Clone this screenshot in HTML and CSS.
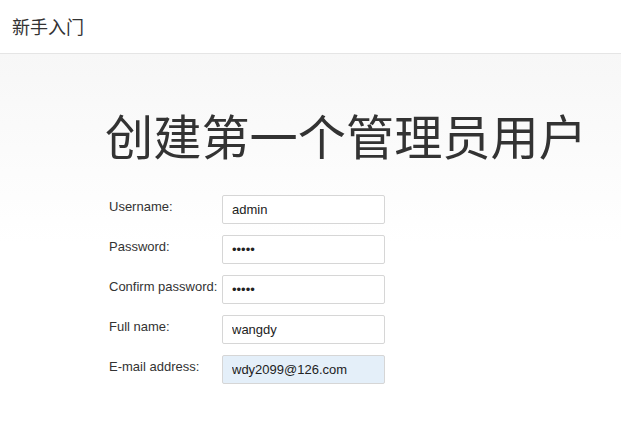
FILE: index.html
```html
<!DOCTYPE html>
<html lang="zh-CN">
<head>
<meta charset="utf-8">
<title>新手入门</title>
<link rel="stylesheet" href="styles.css">
</head>
<body>
<header class="topbar">
  <div class="brand">新手入门</div>
</header>
<main class="wizard">
  <h1 class="title">创建第一个管理员用户</h1>
  <form class="form">
    <div class="row">
      <label class="label" for="u">Username:</label>
      <input class="field" id="u" type="text" value="admin">
    </div>
    <div class="row">
      <label class="label" for="p">Password:</label>
      <input class="field" id="p" type="password" value="admin">
    </div>
    <div class="row">
      <label class="label" for="c">Confirm password:</label>
      <input class="field" id="c" type="password" value="admin">
    </div>
    <div class="row">
      <label class="label" for="f">Full name:</label>
      <input class="field" id="f" type="text" value="wangdy">
    </div>
    <div class="row">
      <label class="label" for="e">E-mail address:</label>
      <input class="field autofilled" id="e" type="text" value="wdy2099@126.com">
    </div>
  </form>
</main>
</body>
</html>
```
FILE: styles.css
```css
html, body {
  margin: 0;
  padding: 0;
  background: #fff;
}
body {
  font-family: "Liberation Sans", Arial, "Noto Sans CJK SC", sans-serif;
  color: #333;
  width: 621px;
  height: 432px;
  overflow: hidden;
}
.topbar {
  height: 53px;
  border-bottom: 1px solid #e5e5e5;
  display: flex;
  align-items: center;
  padding-left: 12px;
  box-sizing: content-box;
}
.brand {
  font-family: "Noto Sans CJK SC", sans-serif;
  font-size: 18px;
  color: #333;
  margin-top: -2px;
}
.wizard {
  background: linear-gradient(#f7f7f7 0px, #ffffff 190px);
  height: 378px;
  padding-left: 105px;
  padding-top: 50px;
  box-sizing: border-box;
}
.title {
  font-family: "Noto Sans CJK SC", sans-serif;
  font-weight: 400;
  font-size: 48.2px;
  line-height: 60px;
  margin: 0;
  color: #333;
  letter-spacing: 0;
}
.form {
  margin-top: 31px;
  padding-left: 4px;
  display: flex;
  flex-direction: column;
  gap: 11px;
}
.row {
  display: flex;
  align-items: flex-start;
}
.label {
  width: 113px;
  font-size: 13px;
  line-height: 16px;
  padding-top: 4px;
  color: #333;
}
.field {
  width: 163px;
  height: 29px;
  box-sizing: border-box;
  border: 1px solid #d6d6d6;
  border-radius: 2px;
  background: #fff;
  padding: 0 9px;
  font-family: "Liberation Sans", Arial, sans-serif;
  font-size: 13px;
  color: #222;
  margin: 0;
  outline: none;
}
.autofilled {
  background: #e4eff9;
}
```
